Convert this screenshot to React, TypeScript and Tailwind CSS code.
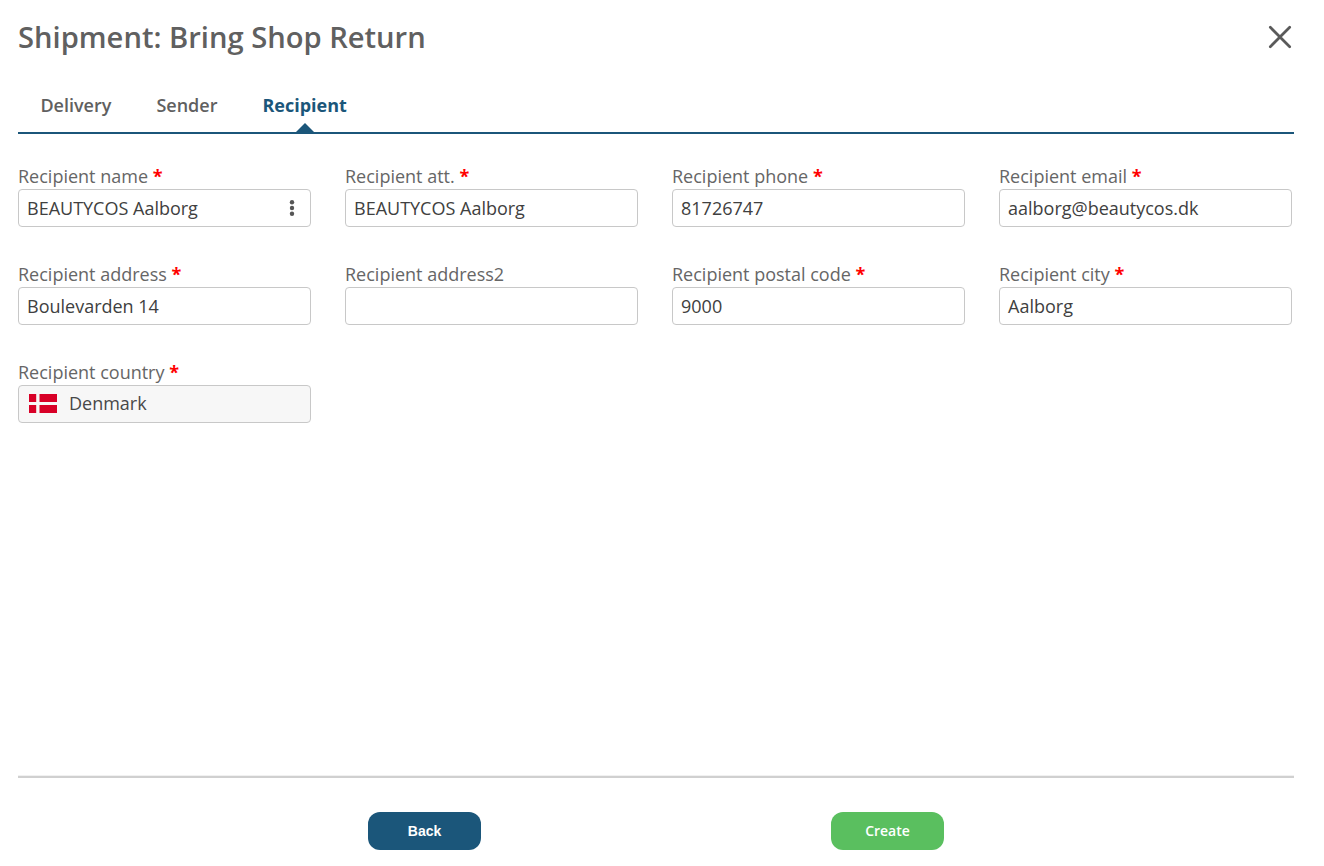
import React from "react";

type Field = { label: string; value: string; required?: boolean; menu?: boolean };

const fields: Field[] = [
  { label: "Recipient name", value: "BEAUTYCOS Aalborg", required: true, menu: true },
  { label: "Recipient att.", value: "BEAUTYCOS Aalborg", required: true },
  { label: "Recipient phone", value: "81726747", required: true },
  { label: "Recipient email", value: "aalborg@beautycos.dk", required: true },
  { label: "Recipient address", value: "Boulevarden 14", required: true },
  { label: "Recipient address2", value: "" },
  { label: "Recipient postal code", value: "9000", required: true },
  { label: "Recipient city", value: "Aalborg", required: true },
];

function Label({ text, required }: { text: string; required?: boolean }) {
  return (
    <div className="h-[25px] whitespace-pre text-[18px] leading-[25px] text-[#666666]">
      {text}
      {required && <span className="font-bold text-[#ff0000]"> *</span>}
    </div>
  );
}

export default function App() {
  return (
    <div className="flex h-[866px] w-[1324px] flex-col overflow-hidden bg-white pl-[18px] pr-[30px] font-['Open_Sans',sans-serif]">
      <header className="flex h-[75px] items-center justify-between pb-[2px] pr-[2px]">
        <h1 className="text-[29.15px] font-semibold leading-[40px] text-[#606060]">Shipment: Bring Shop Return</h1>
        <svg width="24" height="24" viewBox="0 0 24 24" stroke="#5a5a5a" strokeWidth="2.7" strokeLinecap="round" fill="none">
          <path d="M2.3 2.3L21.7 21.7M21.7 2.3L2.3 21.7" />
        </svg>
      </header>
      <nav className="flex h-[59px] shrink-0 gap-[45px] border-b-2 border-[#1b567a] pl-[22.4px] pt-[18px] text-[18px] font-semibold leading-[25px] text-[#606060]">
        <span>Delivery</span>
        <span>Sender</span>
        <span className="flex flex-col items-center justify-between font-bold text-[#1b567a]">
          Recipient
          <svg width="18" height="9" viewBox="0 0 18 9" fill="#1b567a">
            <path d="M0 9L9 0L18 9Z" />
          </svg>
        </span>
      </nav>
      <main className="grid grid-cols-[repeat(4,293px)] gap-x-[34px] gap-y-[35px] pt-[30px]">
        {fields.map((f) => (
          <div key={f.label}>
            <Label text={f.label} required={f.required} />
            <div className="flex h-[38px] items-center justify-between rounded-[4px] border border-[#c8c8c8] pl-2 pr-[15px] text-[18px] text-[#404040]">
              <span>{f.value}</span>
              {f.menu && (
                <svg width="6" height="18" viewBox="0 0 6 18" fill="#555">
                  <circle cx="3" cy="3.2" r="2.2" />
                  <circle cx="3" cy="9" r="2.2" />
                  <circle cx="3" cy="14.8" r="2.2" />
                </svg>
              )}
            </div>
          </div>
        ))}
        <div>
          <Label text="Recipient country" required />
          <div className="flex h-[38px] items-center gap-3 rounded-[4px] border border-[#c8c8c8] bg-[#f7f7f7] pb-px pl-[10px] text-[18px] text-[#484848]">
            <svg width="28" height="19" viewBox="0 0 28 19">
              <path fill="#d80027" d="M0 0H28V19H0Z" />
              <path fill="#f7f7f7" d="M7.2 0h3.3v8H28v3H10.5v8H7.2v-8H0V8h7.2z" />
            </svg>
            <span>Denmark</span>
          </div>
        </div>
      </main>
      <div className="mt-auto h-px shrink-0 bg-[#f1f1f1]" />
      <footer className="flex h-[90px] shrink-0 border-t-2 border-[#d0d0d0] pl-[350px] pt-[34px] text-[14px] text-white">
        <button className="h-[38px] w-[113px] rounded-[12px] bg-[#1b567a] font-['Liberation_Sans',sans-serif] font-bold">Back</button>
        <button className="ml-[350px] h-[38px] w-[113px] rounded-[12px] bg-[#5abf5f] pb-[2px] font-semibold">Create</button>
      </footer>
    </div>
  );
}
